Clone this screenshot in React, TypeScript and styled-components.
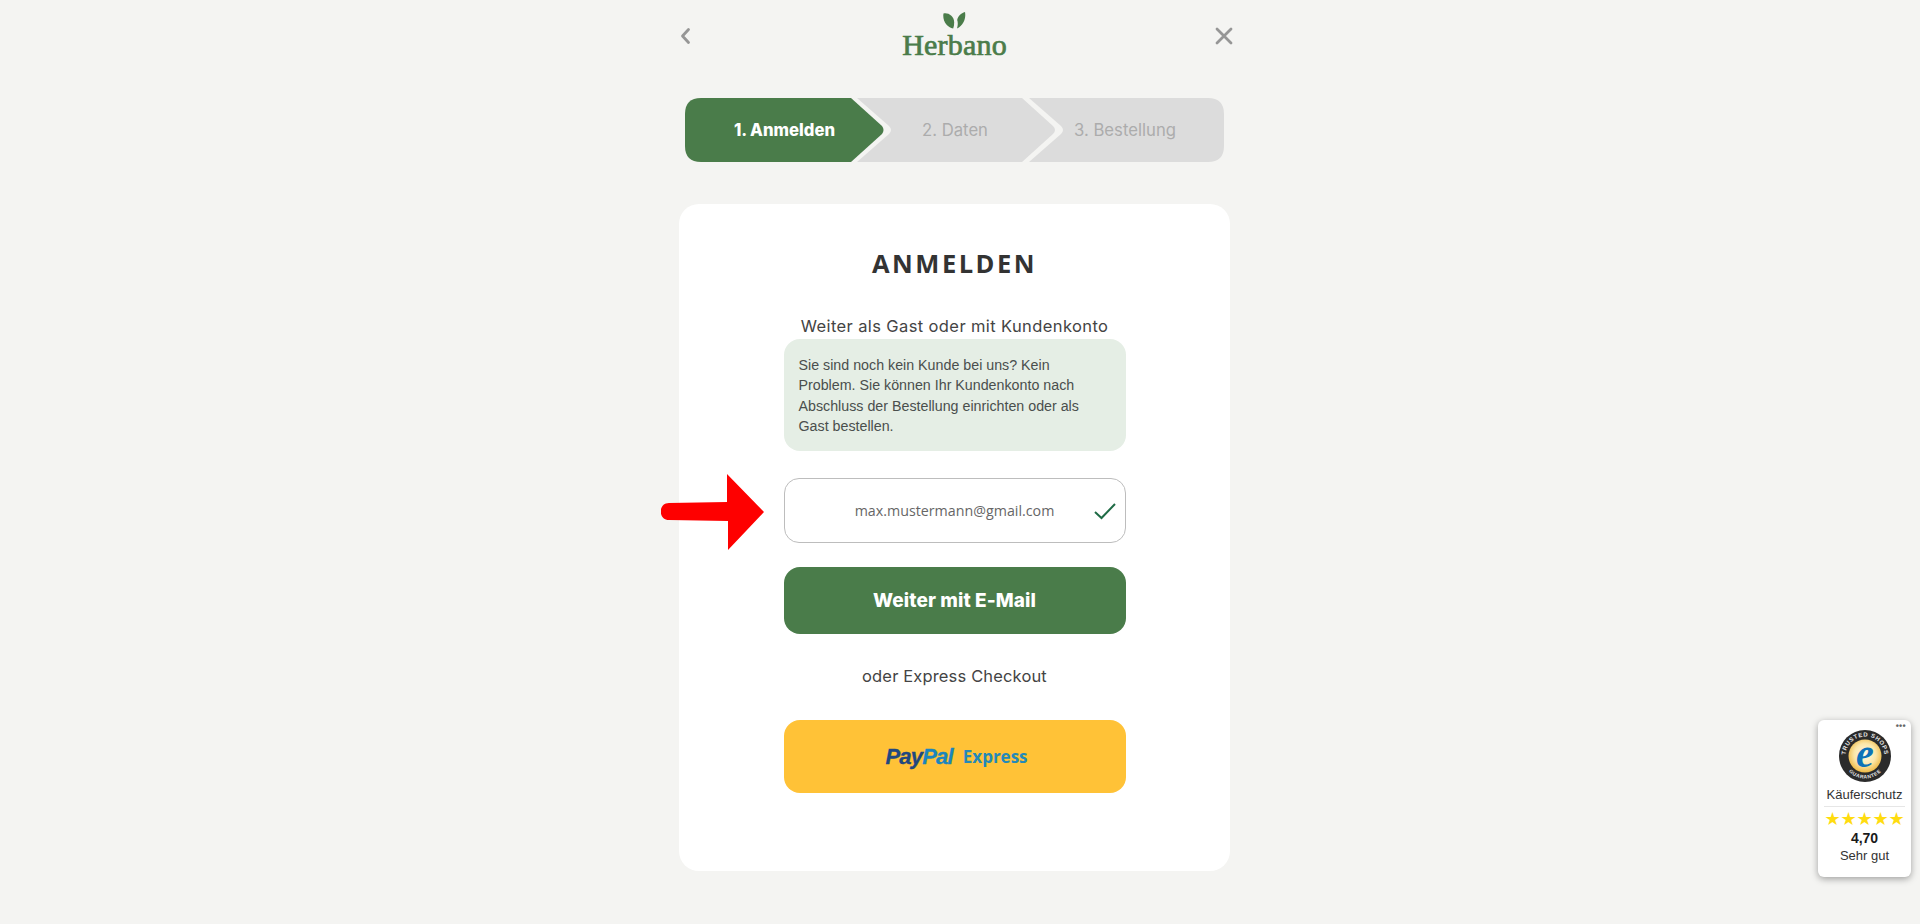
import React from 'react';
import styled, { createGlobalStyle } from 'styled-components';

const GlobalStyle = createGlobalStyle`
  html, body {
    margin: 0;
    padding: 0;
    background: #f4f4f2;
  }
`;

const Page = styled.div`
  height: 924px;
  padding-right: 11px;
  display: flex;
  justify-content: center;
  overflow: hidden;
  position: relative;
  font-family: 'Inter', 'Open Sans', sans-serif;
`;

const Column = styled.div`
  width: 551px;
  display: flex;
  flex-direction: column;
`;

const Header = styled.header`
  height: 98px;
  display: flex;
  align-items: flex-start;
  justify-content: space-between;
  position: relative;
`;

const IconButton = styled.button`
  border: 0;
  background: none;
  padding: 0;
  margin-top: 26px;
  width: 12px;
  height: 20px;
  display: flex;
  align-items: center;
  justify-content: center;
  color: #969696;

  svg {
    flex: none;
  }
`;

const Logo = styled.div`
  display: flex;
  flex-direction: column;
  align-items: center;
  margin-top: 12px;
  color: #4a7c4a;
`;

const LogoText = styled.span`
  font-family: 'Liberation Serif', serif;
  font-size: 30px;
  line-height: 30px;
  font-weight: 400;
  letter-spacing: 0.2px;
  margin-top: 1px;
  -webkit-text-stroke: 0.7px #4a7c4a;
`;

const Stepper = styled.div`
  display: flex;
  margin: 0 6px;
  height: 64px;
`;

const stepShapes = {
  first: "path('M16 0 H166 L197 28 Q200 32 197 36 L166 64 H16 Q0 64 0 48 V16 Q0 0 16 0 Z')",
  middle: "path('M3 0 H168 L199 28 Q203 32 199 36 L168 64 H3 L35 36 Q39 32 35 28 Z')",
  last: "path('M3 0 H182 Q198 0 198 16 V48 Q198 64 182 64 H3 L35 36 Q39 32 35 28 Z')",
};

const Step = styled.div<{ $shape: 'first' | 'middle' | 'last'; $width: number; $active?: boolean }>`
  flex: none;
  width: ${({ $width }) => $width}px;
  height: 64px;
  display: flex;
  align-items: center;
  justify-content: center;
  clip-path: ${({ $shape }) => stepShapes[$shape]};
  background: ${({ $active }) => ($active ? '#4a7c4a' : '#dcdcdc')};
  color: ${({ $active }) => ($active ? '#ffffff' : '#acacac')};
  font-size: 16.700px;
  font-weight: ${({ $active }) => ($active ? 800 : 400)};
  margin-left: ${({ $shape }) => ($shape === 'first' ? 0 : -30)}px;
`;

const Card = styled.main`
  position: relative;
  margin-top: 42px;
  height: 667px;
  box-sizing: border-box;
  padding-top: 43px;
  background: #fff;
  border-radius: 20px;
  display: flex;
  flex-direction: column;
  align-items: center;
`;

const Title = styled.h1`
  margin: 0;
  font-family: 'Open Sans', sans-serif;
  font-size: 25.500px;
  line-height: 32px;
  font-weight: 700;
  letter-spacing: 2.500px;
  color: #333;
`;

const Subtitle = styled.p`
  margin: 35px 0 1px;
  font-size: 16.500px;
  line-height: 24px;
  letter-spacing: 0.39px;
  color: #444;
`;

const Notice = styled.div`
  width: 342px;
  box-sizing: border-box;
  padding: 16px 30px 15px 15px;
  background: #e5eee5;
  border-radius: 16px;
  font-family: 'Liberation Sans', Arial, sans-serif;
  font-size: 14.250px;
  line-height: 20.300px;
  color: #4a4f4d;
`;

const InputWrap = styled.div`
  position: relative;
  margin-top: 27px;
  width: 342px;
  height: 65px;
`;

const EmailInput = styled.input`
  width: 100%;
  height: 100%;
  box-sizing: border-box;
  border: 1.500px solid #bdbdbd;
  border-radius: 15px;
  background: #fff;
  text-align: center;
  font-family: 'Open Sans', sans-serif;
  font-size: 14.250px;
  color: #666;
  outline: none;
`;

const CheckMark = styled.svg`
  position: absolute;
  right: 9px;
  top: 24px;
`;

const PrimaryButton = styled.button`
  margin-top: 24px;
  width: 342px;
  height: 67px;
  border: 0;
  border-radius: 16px;
  background: #4a7c4a;
  color: #fff;
  font-family: 'Inter', sans-serif;
  font-size: 19px;
  font-weight: 800;
  letter-spacing: 0.1px;
`;

const Divider = styled.p`
  margin: 30px 0 32px;
  font-size: 16.500px;
  line-height: 24px;
  letter-spacing: 0.15px;
  color: #444;
`;

const PayPalButton = styled.button`
  width: 342px;
  height: 73px;
  border: 0;
  border-radius: 16px;
  background: #ffc237;
  padding: 0 0 0 4px;
  display: flex;
  align-items: center;
  justify-content: center;
  gap: 10px;
`;

const PayPalMark = styled.span`
  font-family: 'Liberation Sans', Arial, sans-serif;
  font-size: 22px;
  font-weight: 700;
  font-style: italic;
  letter-spacing: -0.8px;
  -webkit-text-stroke: 0.3px currentColor;
  color: #21477f;
`;

const PayPalLight = styled.span`
  color: #1b85bd;
`;

const ExpressLabel = styled.span`
  font-family: 'Open Sans', sans-serif;
  font-size: 17px;
  font-weight: 700;
  color: #2489b8;
`;

const RedArrow = styled.svg`
  position: absolute;
  left: -18px;
  top: 270px;
`;

const TrustBadge = styled.aside`
  position: absolute;
  left: 1818px;
  top: 720px;
  width: 93px;
  height: 157px;
  box-sizing: border-box;
  padding: 10px 6px 0;
  background: #fff;
  border-radius: 6px;
  box-shadow: 0 2px 7px rgba(0, 0, 0, 0.35);
  display: flex;
  flex-direction: column;
  align-items: center;
  font-family: 'Liberation Sans', Arial, sans-serif;
  color: #333;
`;

const BadgeDots = styled.span`
  position: absolute;
  right: 5px;
  top: 2px;
  font-size: 9px;
  line-height: 9px;
  font-weight: 700;
  letter-spacing: 0.3px;
  color: #666;
`;

const BadgeLabel = styled.div`
  margin-top: 5px;
  width: 100%;
  padding-bottom: 4px;
  border-bottom: 1px solid #e6e6e6;
  text-align: center;
  font-size: 13px;
  line-height: 15px;
`;

const Stars = styled.div`
  margin-top: 3px;
  font-size: 18px;
  line-height: 18px;
  letter-spacing: -0.1px;
  white-space: nowrap;
  color: #ffdc0f;
  font-family: 'DejaVu Sans', sans-serif;
`;

const Score = styled.div`
  margin-top: 1px;
  font-size: 14px;
  line-height: 18px;
  font-weight: 700;
  color: #1a1a1a;
`;

const Rating = styled.div`
  font-size: 13px;
  line-height: 18px;
`;

const App: React.FC = () => {
  return (
    <>
      <GlobalStyle />
      <Page>
        <Column>
          <Header>
            <IconButton aria-label="Zurück">
              <svg width="12" height="18" viewBox="0 0 12 18" fill="none">
                <path d="M9.500 2.500 3.500 9l6 6.500" stroke="currentColor" strokeWidth="2.800" strokeLinecap="round" strokeLinejoin="round" />
              </svg>
            </IconButton>
            <Logo>
              <svg width="23" height="17" viewBox="0 0 23 17">
                <path d="M0.500 1.500C5.500 0.500 11 4 11.200 10.500c0 2.200-.4 4.200-1 6C4 15.500-.8 9 .5 1.500Z" fill="currentColor" />
                <path d="M22 0c1.200 6.500-1.500 13.500-8 16.500 1-3 1-6 .2-8.500C15 4 18 1.200 22 0Z" fill="currentColor" />
              </svg>
              <LogoText>Herbano</LogoText>
            </Logo>
            <IconButton aria-label="Schließen">
              <svg width="18" height="18" viewBox="0 0 18 18" fill="none">
                <path d="M2 2l14 14M16 2 2 16" stroke="currentColor" strokeWidth="2.800" strokeLinecap="round" />
              </svg>
            </IconButton>
          </Header>

          <Stepper>
            <Step $shape="first" $width={199} $active>1. Anmelden</Step>
            <Step $shape="middle" $width={202}>2. Daten</Step>
            <Step $shape="last" $width={198}>3. Bestellung</Step>
          </Stepper>

          <Card>
            <RedArrow width="104" height="76" viewBox="0 0 104 76">
              <path d="M8 29 66 28V0l37 38-36 38V47L8 46c-11 0-11-17 0-17Z" fill="#fe0000" />
            </RedArrow>
            <Title>ANMELDEN</Title>
            <Subtitle>Weiter als Gast oder mit Kundenkonto</Subtitle>
            <Notice>
              Sie sind noch kein Kunde bei uns? Kein Problem. Sie können Ihr Kundenkonto nach Abschluss der Bestellung einrichten oder als Gast bestellen.
            </Notice>
            <InputWrap>
              <EmailInput readOnly value="max.mustermann@gmail.com" />
              <CheckMark width="24" height="18" viewBox="0 0 24 18" fill="none">
                <path d="M2 10l6.500 6L22 2" stroke="#1f6b45" strokeWidth="2" />
              </CheckMark>
            </InputWrap>
            <PrimaryButton>Weiter mit E-Mail</PrimaryButton>
            <Divider>oder Express Checkout</Divider>
            <PayPalButton>
              <PayPalMark>Pay<PayPalLight>Pal</PayPalLight></PayPalMark>
              <ExpressLabel>Express</ExpressLabel>
            </PayPalButton>
          </Card>
        </Column>

        <TrustBadge>
          <BadgeDots>•••</BadgeDots>
          <svg width="52" height="52" viewBox="0 0 52 52">
            <defs>
              <radialGradient id="sealGold" cx="50%" cy="45%" r="55%">
                <stop offset="0%" stopColor="#fffbea" />
                <stop offset="60%" stopColor="#fbe6a8" />
                <stop offset="100%" stopColor="#eeb945" />
              </radialGradient>
              <path id="sealTop" d="M6.500 26a19.500 19.500 0 0 1 39 0" />
              <path id="sealBottom" d="M3.500 26a22.500 22.500 0 0 0 45 0" />
            </defs>
            <circle cx="26" cy="26" r="26" fill="#2b2b2b" />
            <circle cx="26" cy="26" r="16.500" fill="url(#sealGold)" />
            <text fontFamily="'Liberation Sans', sans-serif" fontSize="6" fontWeight="700" fill="#e8e8e8" letterSpacing="0.6">
              <textPath href="#sealTop" startOffset="50%" textAnchor="middle">TRUSTED SHOPS</textPath>
            </text>
            <text fontFamily="'Liberation Sans', sans-serif" fontSize="5" fontWeight="700" fill="#e8e8e8" letterSpacing="0.5">
              <textPath href="#sealBottom" startOffset="50%" textAnchor="middle">GUARANTEE</textPath>
            </text>
            <text x="26" y="37" textAnchor="middle" fontFamily="'Liberation Serif', serif" fontSize="40" fontStyle="italic" fontWeight="700" fill="#0d73b8">e</text>
          </svg>
          <BadgeLabel>Käuferschutz</BadgeLabel>
          <Stars>★★★★★</Stars>
          <Score>4,70</Score>
          <Rating>Sehr gut</Rating>
        </TrustBadge>
      </Page>
    </>
  );
};

export default App;
